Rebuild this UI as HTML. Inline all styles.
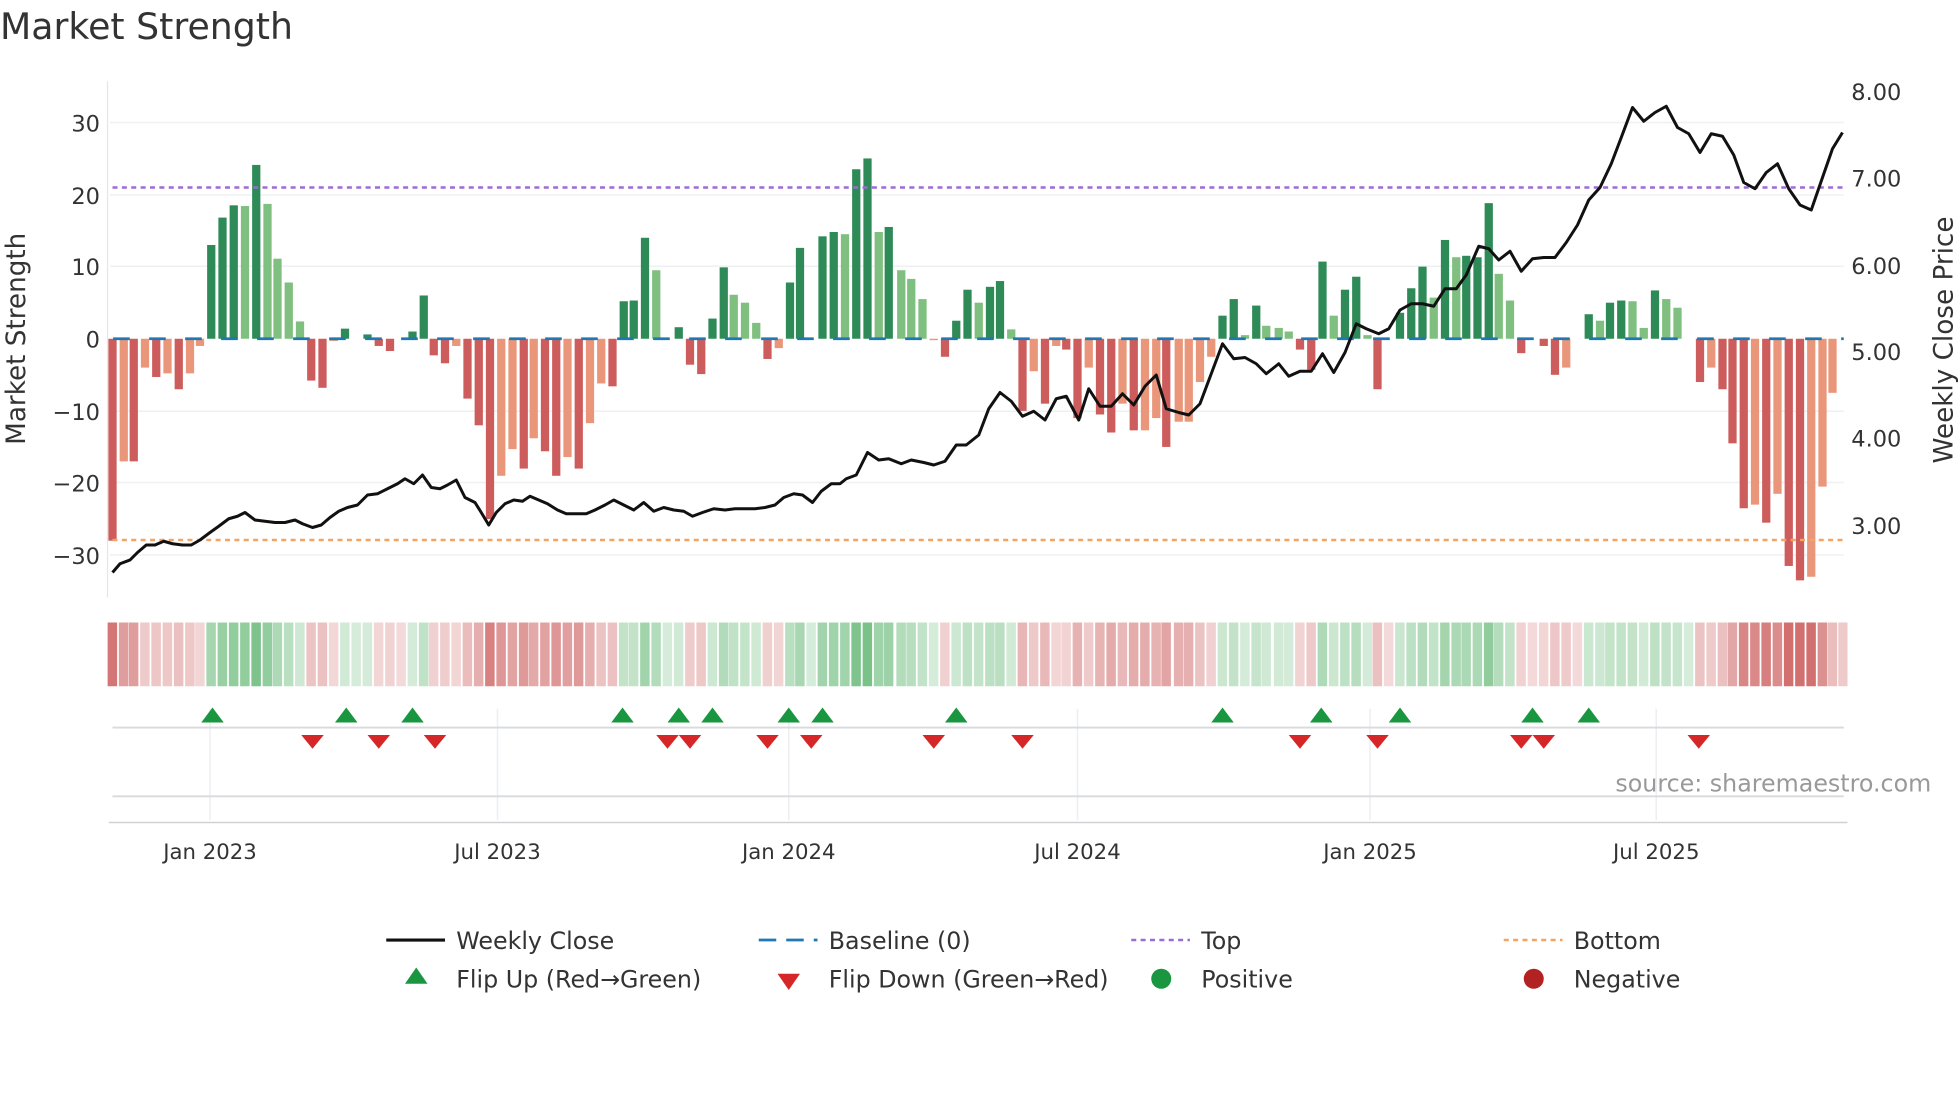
<!DOCTYPE html>
<html><head><meta charset="utf-8"><style>
html,body{margin:0;padding:0;background:#fff;width:1960px;height:1102px;overflow:hidden}
svg{display:block}
text{font-family:"DejaVu Sans","Liberation Sans",sans-serif;fill:#333}
</style></head><body>
<svg id="s" width="1960" height="1102" viewBox="0 0 1568 881.6" xmlns="http://www.w3.org/2000/svg">
<text x="0" y="31" font-size="29">Market Strength</text>
<g stroke="#eef0f2" stroke-width="1.2">
<line x1="88" x2="1475" y1="98" y2="98"/><line x1="88" x2="1475" y1="156" y2="156"/>
<line x1="88" x2="1475" y1="213" y2="213"/><line x1="88" x2="1475" y1="329" y2="329"/>
<line x1="88" x2="1475" y1="386" y2="386"/><line x1="88" x2="1475" y1="444" y2="444"/>
</g>
<line x1="86" x2="86" y1="65" y2="478" stroke="#e6e6e6" stroke-width="1"/>
<g font-size="18" text-anchor="end">
<text x="80" y="105">30</text><text x="80" y="163">20</text><text x="80" y="220">10</text>
<text x="80" y="278">0</text><text x="80" y="336">−10</text><text x="80" y="393">−20</text><text x="80" y="451">−30</text>
</g>
<g font-size="18">
<text x="1481" y="80">8.00</text><text x="1481" y="149">7.00</text><text x="1481" y="219">6.00</text>
<text x="1481" y="288">5.00</text><text x="1481" y="357">4.00</text><text x="1481" y="427">3.00</text>
</g>
<text font-size="21" text-anchor="middle" transform="translate(20,271) rotate(-90)">Market Strength</text>
<text font-size="21" text-anchor="middle" transform="translate(1562,272) rotate(-90)">Weekly Close Price</text>
<g id="bars"></g>
<line x1="90" x2="1475" y1="150" y2="150" stroke="#9b6bd6" stroke-width="2" stroke-dasharray="4,3.5"/>
<line x1="90" x2="1475" y1="432" y2="432" stroke="#f4a460" stroke-width="2" stroke-dasharray="4,3.5"/>
<line x1="90.5" x2="1475" y1="271" y2="271" stroke="#1f77b4" stroke-width="2.2" stroke-dasharray="13.3,15.5"/>
<polyline id="pl" fill="none" stroke="#111" stroke-width="2.4" stroke-linejoin="round"/>
<g id="strip"></g>
<g stroke="#eceef0" stroke-width="1.2">
<line x1="168" x2="168" y1="567" y2="656"/><line x1="398" x2="398" y1="567" y2="656"/>
<line x1="631" x2="631" y1="567" y2="656"/><line x1="862" x2="862" y1="567" y2="656"/>
<line x1="1096" x2="1096" y1="567" y2="656"/><line x1="1325" x2="1325" y1="567" y2="656"/>
</g>
<line x1="90" x2="1475" y1="582" y2="582" stroke="#d8dadd" stroke-width="1.5"/>
<line x1="90" x2="1475" y1="637" y2="637" stroke="#d8dadd" stroke-width="1.5"/>
<line x1="87" x2="1478" y1="658" y2="658" stroke="#cfd1d4" stroke-width="1.2"/>
<g id="mk"></g>
<text x="1545" y="633" font-size="19" text-anchor="end" style="fill:#999">source: sharemaestro.com</text>
<g font-size="17" text-anchor="middle">
<text x="168" y="687">Jan 2023</text><text x="398" y="687">Jul 2023</text><text x="631" y="687">Jan 2024</text>
<text x="862" y="687">Jul 2024</text><text x="1096" y="687">Jan 2025</text><text x="1325" y="687">Jul 2025</text>
</g>
<g font-size="19">
<line x1="309" x2="356" y1="752" y2="752" stroke="#111" stroke-width="2.5"/><text x="365" y="759">Weekly Close</text>
<line x1="607" x2="654" y1="752" y2="752" stroke="#1f77b4" stroke-width="2.2" stroke-dasharray="14,8"/><text x="663" y="759">Baseline (0)</text>
<line x1="905" x2="952" y1="752" y2="752" stroke="#9b6bd6" stroke-width="2" stroke-dasharray="4,3.5"/><text x="961" y="759">Top</text>
<line x1="1203" x2="1250" y1="752" y2="752" stroke="#f4a460" stroke-width="2" stroke-dasharray="4,3.5"/><text x="1259" y="759">Bottom</text>
<polygon points="333,774 342,787 324,787" fill="#1a9641"/><text x="365" y="790">Flip Up (Red→Green)</text>
<polygon points="622,779 640,779 631,792" fill="#d62728"/><text x="663" y="790">Flip Down (Green→Red)</text>
<circle cx="929" cy="783" r="8" fill="#1a9641"/><text x="961" y="790">Positive</text>
<circle cx="1227" cy="783" r="8" fill="#b22222"/><text x="1259" y="790">Negative</text>
</g>
</svg>
<script>
var B=[[90,-28,'R'],[99,-17,'P'],[107,-17,'R'],[116,-4,'P'],[125,-5.3,'R'],[134,-4.8,'P'],[143,-7,'R'],[152,-4.8,'P'],[160,-1,'P'],
[169,13,'D'],[178,16.8,'D'],[187,18.5,'D'],[196,18.4,'L'],[205,24.1,'D'],[214,18.7,'L'],[222,11.1,'L'],[231,7.8,'L'],[240,2.4,'L'],
[249,-5.8,'R'],[258,-6.8,'R'],[267,-0.3,'P'],[276,1.4,'D'],[285,0,'D'],[294,0.6,'D'],[303,-1,'R'],[312,-1.7,'R'],[321,0,'D'],[330,1,'D'],[339,6,'D'],
[347,-2.3,'R'],[356,-3.4,'R'],[365,-1,'P'],[374,-8.3,'R'],[383,-12,'R'],[392,-25,'R'],[401,-19,'P'],[410,-15.3,'P'],[419,-18,'R'],[427,-13.8,'P'],
[436,-15.6,'R'],[445,-19,'R'],[454,-16.4,'P'],[463,-18,'R'],[472,-11.7,'P'],[481,-6.2,'P'],[490,-6.6,'R'],
[499,5.2,'D'],[507,5.3,'D'],[516,14,'D'],[525,9.5,'L'],[534,0,'D'],[543,1.6,'D'],[552,-3.6,'R'],[561,-4.9,'R'],[570,2.8,'D'],[579,9.9,'D'],[587,6.1,'L'],
[596,5,'L'],[605,2.2,'L'],[614,-2.8,'R'],[623,-1.3,'P'],[632,7.8,'D'],[640,12.6,'D'],[649,0,'D'],[658,14.2,'D'],[667,14.8,'D'],[676,14.5,'L'],[685,23.5,'D'],
[694,25,'D'],[703,14.8,'L'],[711,15.5,'D'],[721,9.5,'L'],[729,8.3,'L'],[738,5.5,'L'],[747,-0.2,'P'],[756,-2.5,'R'],[765,2.5,'D'],[774,6.8,'D'],[783,5,'L'],
[792,7.2,'D'],[800,8,'D'],[809,1.3,'L'],[818,-10,'R'],[827,-4.5,'P'],[836,-9,'R'],[845,-1,'P'],[853,-1.5,'R'],[862,-11,'R'],[871,-4,'P'],[880,-10.5,'R'],
[889,-13,'R'],[898,-9,'P'],[907,-12.7,'R'],[916,-12.7,'P'],[925,-11,'P'],[933,-15,'R'],[943,-11.5,'P'],[951,-11.5,'P'],[960,-6,'P'],[969,-2.5,'P'],
[978,3.2,'D'],[987,5.5,'D'],[996,0.5,'L'],[1005,4.6,'D'],[1013,1.8,'L'],[1023,1.5,'L'],[1031,1,'L'],[1040,-1.5,'R'],[1049,-4.3,'R'],[1058,10.7,'D'],
[1067,3.2,'L'],[1076,6.8,'D'],[1085,8.6,'D'],[1094,0.5,'L'],[1102,-7,'R'],[1111,0,'D'],[1120,3.6,'D'],[1129,7,'D'],[1138,10,'D'],[1147,5.7,'L'],
[1156,13.7,'D'],[1165,11.3,'L'],[1173,11.5,'D'],[1182,11.3,'D'],[1191,18.8,'D'],[1199,9,'L'],[1208,5.3,'L'],[1217,-2,'R'],[1226,0,'D'],[1235,-1,'R'],
[1244,-5,'R'],[1253,-4,'P'],[1262,0,'D'],[1271,3.4,'D'],[1280,2.5,'L'],[1288,5,'D'],[1297,5.3,'D'],[1306,5.2,'L'],[1315,1.5,'L'],[1324,6.7,'D'],
[1333,5.5,'L'],[1342,4.3,'L'],[1351,0,'D'],[1360,-6,'R'],[1369,-4,'P'],[1378,-7,'R'],[1386,-14.5,'R'],[1395,-23.5,'R'],[1404,-23,'P'],[1413,-25.5,'R'],
[1422,-21.5,'P'],[1431,-31.5,'R'],[1440,-33.5,'R'],[1449,-33,'P'],[1458,-20.5,'P'],[1466,-7.5,'P']];
var C={D:'#2e8b57',L:'#7fbf7f',R:'#cd5c5c',P:'#e9967a'};
var NS='http://www.w3.org/2000/svg';
function el(t,a,p){var e=document.createElementNS(NS,t);for(var k in a)e.setAttribute(k,a[k]);document.getElementById(p).appendChild(e);return e;}
var sign=1;
B.forEach(function(b){var v=b[1],y0=271,h=Math.abs(v)*5.77;
 if(h>0.3)el('rect',{x:b[0]-3.3,y:v>0?y0-h:y0,width:6.6,height:h,fill:C[b[2]]},'bars');
 if(v>0.3)sign=1;else if(v<-0.3)sign=-1;
 var a=0.22+Math.min(Math.abs(v),30)/30*0.6;
 var col=sign>0?'rgba(70,170,90,'+a+')':'rgba(200,80,80,'+a+')';
 el('rect',{x:b[0]-3.9,y:498,width:7.6,height:51,fill:col},'strip');});
el('rect',{x:1470.6,y:498,width:7.4,height:51,fill:'rgba(200,80,80,0.3)'},'strip');
var P=[90,458,96,451,104,448,110,442,117,436,124,436,131,433,138,435,146,436,153,436,160,432,168,426,175,421,183,415,190,413,196,410,204,416,212,417,220,418,228,418,236,416,242,419,250,422,257,420,264,414,271,409,278,406,286,404,294,396,302,395,310,391,318,387,324,383,331,387,338,380,345,390,352,391,358,388,365,384,372,398,380,402,385,410,391,420,397,410,404,403,411,400,418,401,424,397,431,400,438,403,446,408,453,411,461,411,469,411,476,408,484,404,491,400,499,404,507,408,515,402,523,409,531,406,539,408,547,409,554,413,562,410,571,407,580,408,588,407,596,407,604,407,612,406,620,404,627,398,635,395,642,396,650,402,657,393,665,387,672,387,677,383,685,380,694,362,703,368,711,367,721,371,729,368,739,370,747,372,756,369,765,356,773,356,783,348,791,327,800,314,809,321,818,333,827,329,836,336,845,319,853,317,863,336,871,311,880,325,889,325,898,315,907,324,916,309,925,300,933,327,943,330,951,332,960,323,969,299,978,275,987,287,996,286,1005,291,1013,299,1023,291,1031,301,1040,297,1049,297,1058,283,1067,298,1076,282,1085,259,1093,263,1103,267,1111,263,1120,248,1129,243,1138,243,1147,245,1156,231,1165,231,1173,220,1183,197,1191,199,1199,208,1208,201,1217,217,1226,207,1235,206,1244,206,1253,194,1262,180,1271,160,1280,150,1289,131,1297,110,1306,86,1315,97,1324,90,1333,85,1342,102,1351,107,1360,122,1369,107,1378,109,1387,124,1395,146,1404,151,1413,138,1422,131,1431,151,1440,164,1449,168,1458,142,1466,119,1474,106];
document.getElementById('pl').setAttribute('points',P.join(' '));
[170,277,330,498,543,570,631,658,765,978,1057,1120,1226,1271].forEach(function(x){el('polygon',{points:x+',566 '+(x+9)+',578 '+(x-9)+',578',fill:'#1a9641'},'mk');});
[250,303,348,534,552,614,649,747,818,1040,1102,1217,1235,1359].forEach(function(x){el('polygon',{points:(x-9)+',588 '+(x+9)+',588 '+x+',599',fill:'#d62728'},'mk');});
</script>
</body></html>
